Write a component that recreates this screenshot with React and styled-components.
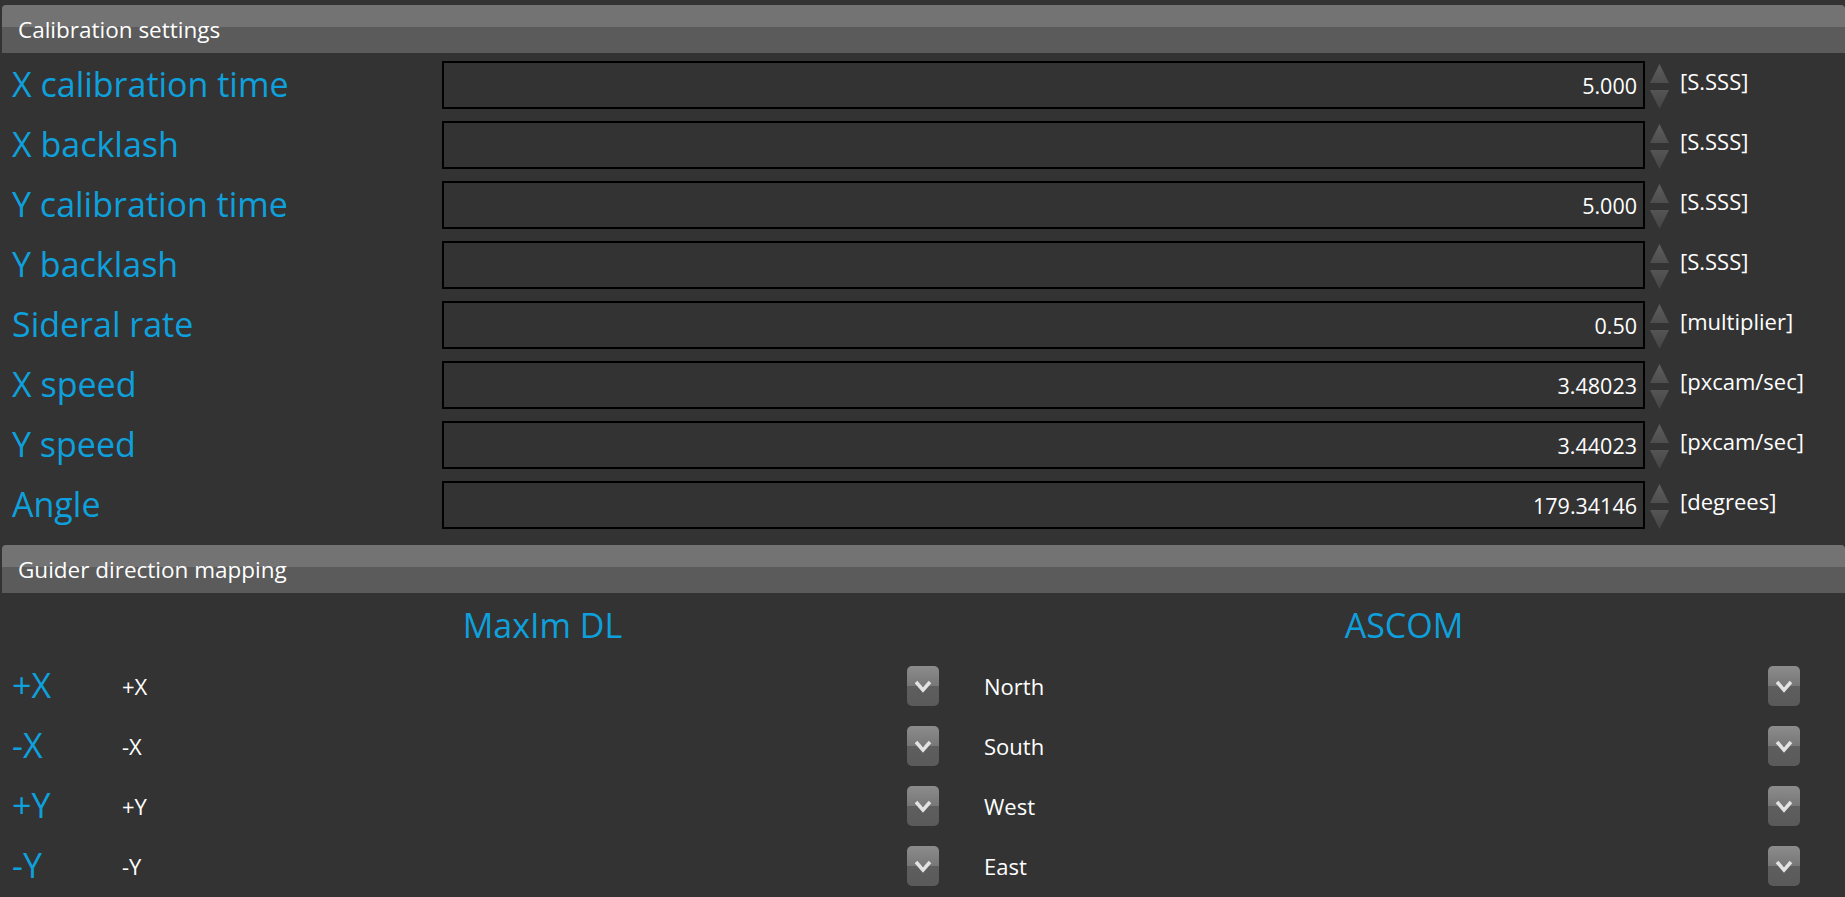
import React from 'react'
import styled, { createGlobalStyle } from 'styled-components'

const BLUE = '#0ea0dc'
const FONT = `"Open Sans", "Noto Sans", "DejaVu Sans", sans-serif`

const GlobalStyle = createGlobalStyle`
  html, body {
    margin: 0;
    padding: 0;
    background: #333333;
  }
  body {
    font-family: ${FONT};
    color: #ffffff;
  }
`

const Page = styled.div`
  width: 1845px;
  height: 897px;
  overflow: hidden;
  background: #333333;
  padding-top: 5px;
  box-sizing: border-box;
`

const Header = styled.div`
  margin-left: 2px;
  height: 48px;
  display: flex;
  align-items: center;
  padding-left: 16px;
  border-radius: 4px 4px 0 0;
  background: linear-gradient(to bottom, #737373 0, #737373 22px, #5b5b5b 22px, #5b5b5b 100%);
  font-size: 22.5px;
  color: #ffffff;
  margin-top: ${p => p.$top || 0}px;
`

const Settings = styled.div`
  padding-top: 2px;
  display: flex;
  flex-direction: column;
`

const Row = styled.div`
  height: 60px;
  display: grid;
  grid-template-columns: 442px 1203px 5px 19px 11px 1fr;
  align-items: center;
`

const Label = styled.div`
  padding-left: 12px;
  font-size: 34px;
  color: ${BLUE};
  white-space: nowrap;
  margin-top: -2px;
`

const ValueBox = styled.div`
  grid-column: 2;
  height: 48px;
  box-sizing: border-box;
  border: 2px solid #000000;
  background: #333333;
  display: flex;
  align-items: center;
  justify-content: flex-end;
  padding-right: 6px;
  font-size: 21.5px;
  color: #ffffff;
`

const Spin = styled.svg`
  grid-column: 4;
  display: block;
`

const Unit = styled.div`
  grid-column: 6;
  font-size: 22px;
  color: #ffffff;
  white-space: nowrap;
  margin-top: -8px;
`

const Mapping = styled.div`
  display: grid;
  grid-template-columns: 122px 817px 45px 816px 1fr;
`

const ColHead = styled.div`
  grid-column: ${p => p.$col};
  height: 63px;
  display: flex;
  align-items: center;
  justify-content: center;
  padding-left: 24px;
  font-size: 34px;
  color: ${BLUE};
`

const Cell = styled.div`
  grid-column: ${p => p.$col};
  height: 60px;
  display: flex;
  align-items: center;
`

const Combo = styled.div`
  grid-column: ${p => p.$col};
  height: 60px;
  display: flex;
  align-items: center;
  justify-content: space-between;
  font-size: 22px;
  color: #ffffff;
`

const DropButton = styled.div`
  width: 32px;
  height: 40px;
  border-radius: 5px;
  background: linear-gradient(to bottom, #8c8c8c 0, #777777 50%, #5e5e5e 50%, #5a5a5a 100%);
  display: flex;
  align-items: center;
  justify-content: center;
`

const Spinner = () => (
  <Spin width="19" height="48" viewBox="0 0 19 48">
    <defs>
      <linearGradient id="up" x1="0" y1="0" x2="0" y2="1">
        <stop offset="0" stopColor="#5e5e5e" />
        <stop offset="1" stopColor="#4e4e4e" />
      </linearGradient>
      <linearGradient id="down" x1="0" y1="0" x2="0" y2="1">
        <stop offset="0" stopColor="#555555" />
        <stop offset="1" stopColor="#444444" />
      </linearGradient>
    </defs>
    <polygon points="9.5,3 19,22 0,22" fill="url(#up)" />
    <polygon points="0,29 19,29 9.5,48" fill="url(#down)" />
  </Spin>
)

const Chevron = () => (
  <svg width="32" height="40" viewBox="0 0 32 40">
    <polyline points="9,16 16,24 23,16" fill="none" stroke="#e2e2e2" strokeWidth="3.5" />
  </svg>
)

const settings = [
  ['X calibration time', '5.000', '[S.SSS]'],
  ['X backlash', '', '[S.SSS]'],
  ['Y calibration time', '5.000', '[S.SSS]'],
  ['Y backlash', '', '[S.SSS]'],
  ['Sideral rate', '0.50', '[multiplier]'],
  ['X speed', '3.48023', '[pxcam/sec]'],
  ['Y speed', '3.44023', '[pxcam/sec]'],
  ['Angle', '179.34146', '[degrees]'],
]

const mapping = [
  ['+X', '+X', 'North'],
  ['-X', '-X', 'South'],
  ['+Y', '+Y', 'West'],
  ['-Y', '-Y', 'East'],
]

const App = () => {
  return (
    <>
      <GlobalStyle />
      <Page>
        <Header>Calibration settings</Header>
        <Settings>
          {settings.map(([label, value, unit]) => (
            <Row key={label}>
              <Label>{label}</Label>
              <ValueBox>{value}</ValueBox>
              <Spinner />
              <Unit>{unit}</Unit>
            </Row>
          ))}
        </Settings>
        <Header $top={10}>Guider direction mapping</Header>
        <Mapping>
          <ColHead $col={2}>MaxIm DL</ColHead>
          <ColHead $col={4}>ASCOM</ColHead>
          {mapping.map(([label, maxim, ascom]) => (
            <React.Fragment key={label}>
              <Cell $col={1}>
                <Label>{label}</Label>
              </Cell>
              <Combo $col={2}>
                {maxim}
                <DropButton><Chevron /></DropButton>
              </Combo>
              <Combo $col={4}>
                {ascom}
                <DropButton><Chevron /></DropButton>
              </Combo>
            </React.Fragment>
          ))}
        </Mapping>
      </Page>
    </>
  )
}

export default App
